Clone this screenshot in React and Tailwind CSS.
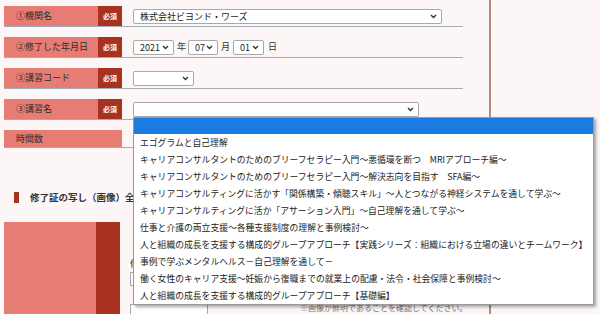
import React from 'react';

const options = [
  'エゴグラムと自己理解',
  'キャリアコンサルタントのためのブリーフセラピー入門〜悪循環を断つ　MRIアプローチ編〜',
  'キャリアコンサルタントのためのブリーフセラピー入門〜解決志向を目指す　SFA編〜',
  'キャリアコンサルティングに活かす「関係構築・傾聴スキル」〜人とつながる神経システムを通して学ぶ〜',
  'キャリアコンサルティングに活か「アサーション入門」〜自己理解を通して学ぶ〜',
  '仕事と介護の両立支援〜各種支援制度の理解と事例検討〜',
  '人と組織の成長を支援する構成的グループアプローチ【実践シリーズ：組織における立場の違いとチームワーク】',
  '事例で学ぶメンタルヘルス－自己理解を通して－',
  '働く女性のキャリア支援〜妊娠から復職までの就業上の配慮・法令・社会保障と事例検討〜',
  '人と組織の成長を支援する構成的グループアプローチ【基礎編】',
];

const Chevron = () => (
  <svg width="7" height="5" viewBox="0 0 7 5" className="shrink-0">
    <polyline points="1,1 3.5,3.5 6,1" fill="none" stroke="#333" strokeWidth="1.4" />
  </svg>
);

const Select = ({ value, className }) => (
  <div className={`flex items-center justify-between h-[15px] bg-white border border-[#a9a9a9] rounded-[2px] pl-[6px] pr-[4px] text-[9px] text-[#222] ${className}`}>
    <span className="leading-none">{value}</span>
    <Chevron />
  </div>
);

const Label = ({ text, required = true }) => (
  <div className="flex h-[20px] w-[118px] shrink-0">
    <div className="flex items-center flex-1 bg-[#e67c73] pl-[12px] text-[9px] text-[#2b2b2b]">{text}</div>
    {required && (
      <div className="flex items-center justify-center w-[24px] bg-[#a7321f] text-[7px] font-bold text-white">必須</div>
    )}
  </div>
);

export default function App() {
  return (
    <div className="relative w-[600px] h-[314px] overflow-hidden bg-[#fdf6f7] font-['Noto_Sans_CJK_JP',sans-serif]">
      <div className="w-[491px] h-full border-r-2 border-[#b48a7c] pl-[4px] pt-[6px]">
        <div className="w-[459px]">
          <div className="flex items-center h-[21px] border-b border-[#a3acb9]">
            <Label text="①機関名" />
            <Select value="株式会社ビヨンド・ワーズ" className="ml-[11px] w-[309px]" />
          </div>
          <div className="flex items-center h-[21px] border-b border-[#a3acb9] mt-[10px] text-[9px] text-[#333]">
            <Label text="②修了した年月日" />
            <Select value="2021" className="ml-[11px] w-[41px]" />
            <span className="ml-[3px] mr-[2px]">年</span>
            <Select value="07" className="w-[30px]" />
            <span className="ml-[3px] mr-[3px]">月</span>
            <Select value="01" className="w-[31px]" />
            <span className="ml-[4px]">日</span>
          </div>
          <div className="flex items-center h-[21px] border-b border-[#a3acb9] mt-[10px]">
            <Label text="③講習コード" />
            <Select value="" className="ml-[11px] w-[61px]" />
          </div>
          <div className="flex items-center h-[21px] border-b border-[#a3acb9] mt-[10px]">
            <Label text="③講習名" />
            <Select value="" className="ml-[11px] w-[286px]" />
          </div>
          <div className="flex items-center h-[18px] border-b border-[#a3acb9] mt-[10px]">
            <div className="flex items-center h-[17px] w-[118px] bg-[#e67c73] pl-[12px] text-[9px] text-[#2b2b2b]">時間数</div>
          </div>
          <div className="flex items-center mt-[42px] pl-[10px]">
            <div className="w-[5px] h-[11px] bg-[#a7321f]" />
            <span className="ml-[11px] text-[9.5px] font-bold text-[#333]">修了証の写し（画像）全体</span>
          </div>
          <div className="flex mt-[18px]">
            <div className="flex h-[100px] w-[116px] shrink-0">
              <div className="flex-1 bg-[#e67c73]" />
              <div className="w-[24px] bg-[#a7321f]" />
            </div>
            <div className="ml-[10px] pt-[36px] text-[9px] text-[#333]">
              <div className="leading-[12px]">修了証の画像をアップロードしてください</div>
              <div className="mt-[2px] w-[150px] h-[14px] border border-[#a9a9a9] bg-white" />
              <div className="mt-[18px] w-[78px] h-[30px] border border-[#a9a9a9] bg-white" />
            </div>
          </div>
        </div>
      </div>
      <div className="absolute left-[300px] top-[302px] text-[8px] text-[#777]">※画像が鮮明であることを確認してください。</div>

      <div className="absolute left-[133px] top-[117px] w-[461px] bg-white border border-[#9a9a9a] shadow-[2px_2px_3px_rgba(0,0,0,0.35)] text-[8.8px] text-[#222]">
        <div className="h-[16px] bg-[#1a7be0]" />
        {options.map((o) => (
          <div key={o} className="flex items-center h-[17px] pl-[6px] whitespace-nowrap overflow-hidden">{o}</div>
        ))}
      </div>
    </div>
  );
}
